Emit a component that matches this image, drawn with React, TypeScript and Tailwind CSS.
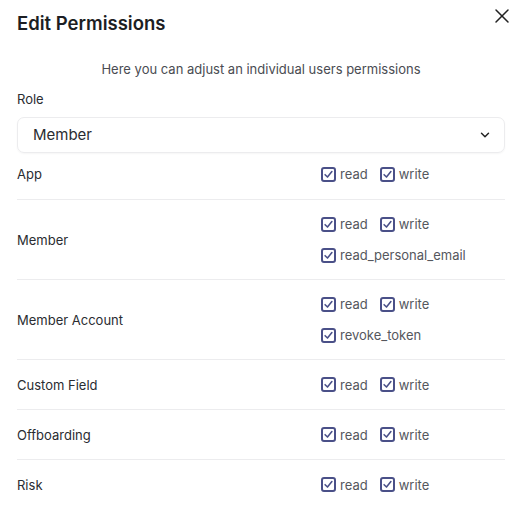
import { ChevronDown, X } from "lucide-react";

type Row = { label: string; perms: string[][] };

const rows: Row[] = [
  { label: "Member", perms: [["read", "write"], ["read_personal_email"]] },
  { label: "Member Account", perms: [["read", "write"], ["revoke_token"]] },
  { label: "Custom Field", perms: [["read", "write"]] },
  { label: "Offboarding", perms: [["read", "write"]] },
  { label: "Risk", perms: [["read", "write"]] },
];

function Check({ label }: { label: string }) {
  return (
    <label className="flex items-center gap-[4px]">
      <span className="flex h-[15px] w-[15px] items-center justify-center rounded-[3px] border-2 border-[#4a5088] bg-white">
        <svg viewBox="0 0 12 12" className="h-[11px] w-[11px]" fill="none">
          <path d="M2.3 6.2 4.9 8.8 9.7 2.8" stroke="#4a5088" strokeWidth="1.7" strokeLinecap="round" strokeLinejoin="round" />
        </svg>
      </span>
      <span className="text-[13px] leading-[20px] text-[#55575d]">{label}</span>
    </label>
  );
}

function PermRow({ label, perms, first }: Row & { first?: boolean }) {
  return (
    <div
      className={`flex items-center border-[#ececee] ${first ? "pb-[4px]" : "border-t"} ${
        perms.length > 1 ? "h-[80px]" : first ? "h-[46px]" : "h-[50px]"
      }`}
    >
      <div className="w-[304px] text-[13px] leading-[20px] text-[#2a2c31]">{label}</div>
      <div className="flex flex-col gap-[11px]">
        {perms.map((line, i) => (
          <div key={i} className="flex gap-[12px]">
            {line.map((p) => (
              <Check key={p} label={p} />
            ))}
          </div>
        ))}
      </div>
    </div>
  );
}

export default function App() {
  return (
    <div className="h-[505px] w-[520px] overflow-hidden bg-white pl-[17px] pr-[15px] pt-[9px] font-['Inter',sans-serif]">
      <div className="flex items-start justify-between">
        <h1 className="text-[18.5px] leading-[28px] font-semibold text-[#1c1e23]">Edit Permissions</h1>
        <X className="-mr-[9px] mt-[-5px] h-[24px] w-[24px] text-[#222]" strokeWidth={1.5} />
      </div>
      <p className="mt-[22px] text-center text-[13px] leading-[20px] text-[#4a4c52]">
        Here you can adjust an individual users permissions
      </p>
      <div className="mt-[10px] text-[13px] leading-[20px] text-[#2a2c31]">Role</div>
      <div className="mt-[8px] flex h-[36px] items-center justify-between rounded-[7px] border border-[#ececee] pl-[15px] pr-[12px] shadow-[0_1px_2px_rgba(0,0,0,0.04)]">
        <span className="text-[15px] text-[#2a2c31]">Member</span>
        <ChevronDown className="h-[14px] w-[14px] text-[#222]" strokeWidth={2.5} />
      </div>
      <PermRow label="App" perms={[["read", "write"]]} first />
      {rows.map((r) => (
        <PermRow key={r.label} {...r} />
      ))}
    </div>
  );
}
